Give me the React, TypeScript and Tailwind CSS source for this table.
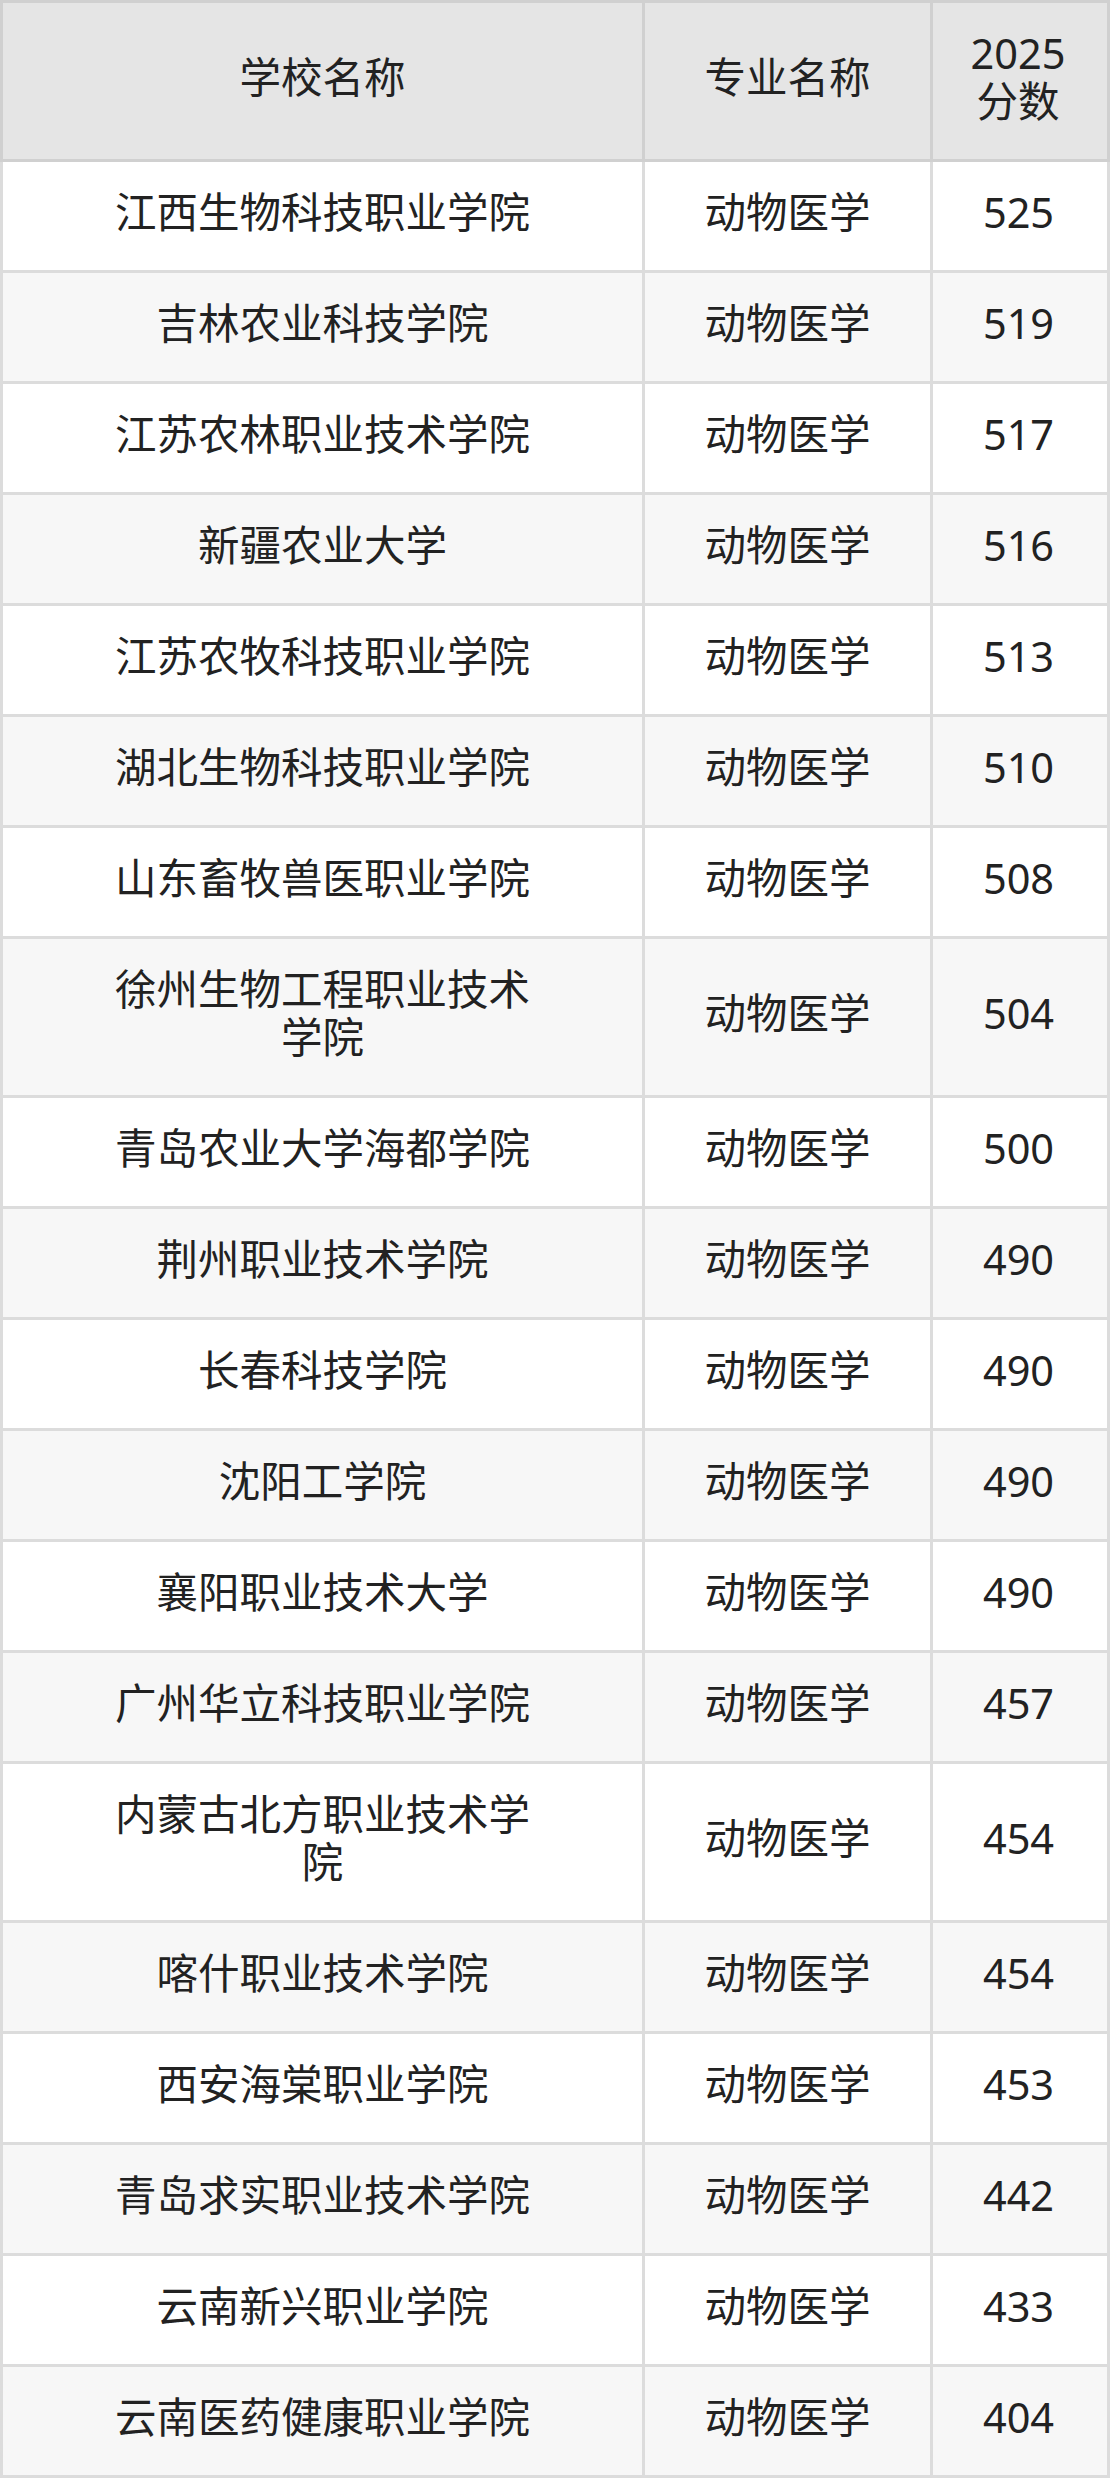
import React from "react";

const rows: { name: string; score: string; tall?: boolean }[] = [
  { name: "江西生物科技职业学院", score: "525" },
  { name: "吉林农业科技学院", score: "519" },
  { name: "江苏农林职业技术学院", score: "517" },
  { name: "新疆农业大学", score: "516" },
  { name: "江苏农牧科技职业学院", score: "513" },
  { name: "湖北生物科技职业学院", score: "510" },
  { name: "山东畜牧兽医职业学院", score: "508" },
  { name: "徐州生物工程职业技术学院", score: "504", tall: true },
  { name: "青岛农业大学海都学院", score: "500" },
  { name: "荆州职业技术学院", score: "490" },
  { name: "长春科技学院", score: "490" },
  { name: "沈阳工学院", score: "490" },
  { name: "襄阳职业技术大学", score: "490" },
  { name: "广州华立科技职业学院", score: "457" },
  { name: "内蒙古北方职业技术学院", score: "454", tall: true },
  { name: "喀什职业技术学院", score: "454" },
  { name: "西安海棠职业学院", score: "453" },
  { name: "青岛求实职业技术学院", score: "442" },
  { name: "云南新兴职业学院", score: "433" },
  { name: "云南医药健康职业学院", score: "404" },
];

export default function App() {
  return (
    <div
      className="w-[1110px] text-[#222222] text-[41.5px] leading-[48px]"
      style={{ fontFamily: '"Noto Sans", "Noto Sans CJK SC", sans-serif' }}
    >
      <div className="grid grid-cols-[639px_285px_174px] gap-x-[3px] bg-[#d0d0d0] p-[3px]">
        <div className="h-[156px] bg-[#e5e5e5] flex items-center justify-center text-center px-[100px] pb-[8px]">
          学校名称
        </div>
        <div className="h-[156px] bg-[#e5e5e5] flex items-center justify-center text-center px-[20px] pb-[8px]">
          专业名称
        </div>
        <div className="h-[156px] bg-[#e5e5e5] flex items-center justify-center text-center pl-[22px] pr-[26px] pb-[8px]">
          2025分数
        </div>
      </div>
      <div className="grid grid-cols-[639px_285px_174px] gap-[3px] bg-[#dcdcdc] px-[3px] pb-[3px]">
        {rows.map((r, i) => {
          const bg = i % 2 === 0 ? "bg-white" : "bg-[#f7f7f7]";
          const h = r.tall ? "h-[156px]" : "h-[108px]";
          return (
            <React.Fragment key={i}>
              <div className={`${bg} ${h} flex items-center justify-center text-center px-[100px] pb-[8px]`}>
                {r.name}
              </div>
              <div className={`${bg} ${h} flex items-center justify-center text-center pb-[8px]`}>
                动物医学
              </div>
              <div className={`${bg} ${h} flex items-center justify-center text-center pr-[3px] pb-[8px]`}>
                {r.score}
              </div>
            </React.Fragment>
          );
        })}
      </div>
    </div>
  );
}
